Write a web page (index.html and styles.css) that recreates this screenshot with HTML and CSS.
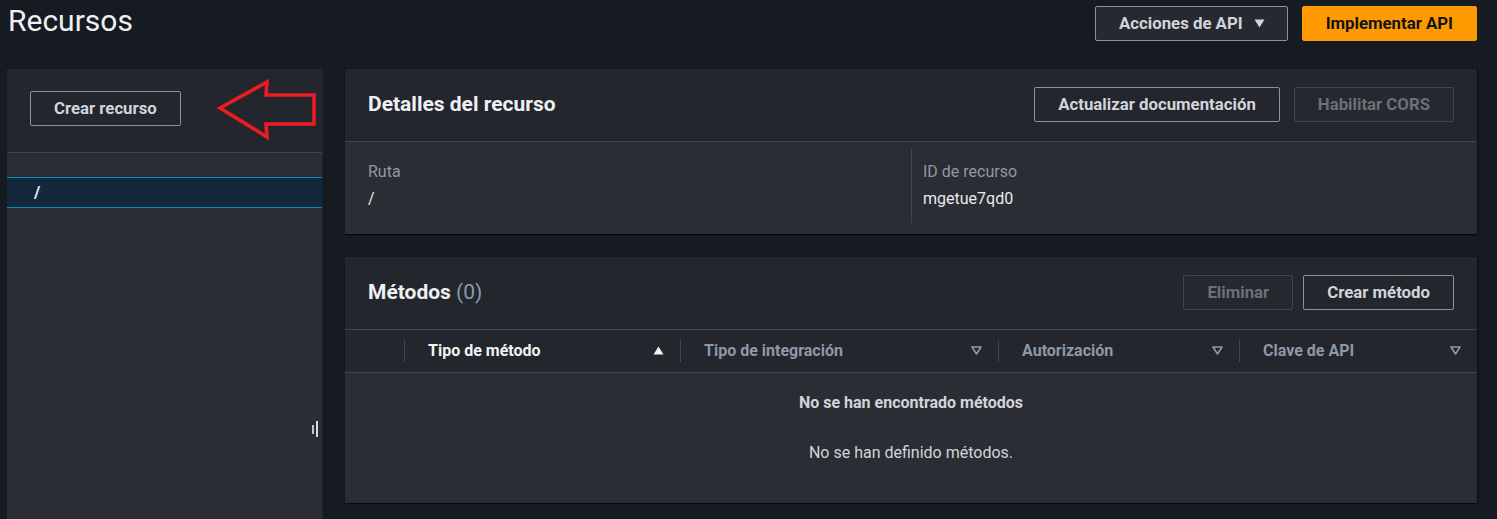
FILE: index.html
```html
<!DOCTYPE html>
<html lang="es">
<head>
<meta charset="utf-8">
<title>Recursos</title>
<link rel="stylesheet" href="styles.css">
</head>
<body>
<div class="page">
  <header class="topbar">
    <h1 class="title">Recursos</h1>
    <div class="top-actions">
      <button class="btn btn-normal btn-dark">Acciones de API
        <svg class="caret" width="11" height="9" viewBox="0 0 11 9"><polygon points="0.5,0.5 10.5,0.5 5.5,8.5" fill="#d1d5db"/></svg>
      </button>
      <button class="btn btn-primary">Implementar API</button>
    </div>
  </header>

  <div class="layout">
    <aside class="side">
      <div class="side-head">
        <button class="btn btn-normal">Crear recurso</button>
      </div>
      <div class="tree">
        <div class="tree-row">/</div>
      </div>
      <svg class="arrow" width="104" height="64" viewBox="0 0 104 64">
        <polygon points="4,30 51,4 50,17 98,17 98,46 50,46 51,59" fill="none" stroke="#ec1c24" stroke-width="3.6" stroke-linejoin="miter"/>
      </svg>
      <div class="resize"><span class="r1"></span><span class="r2"></span></div>
    </aside>

    <main class="main">
      <section class="card">
        <div class="card-head">
          <h2 class="card-title">Detalles del recurso</h2>
          <div class="actions">
            <button class="btn btn-normal">Actualizar documentación</button>
            <button class="btn btn-disabled">Habilitar CORS</button>
          </div>
        </div>
        <div class="details">
          <div class="field">
            <div class="label">Ruta</div>
            <div class="value">/</div>
          </div>
          <div class="field field-sep">
            <div class="label">ID de recurso</div>
            <div class="value">mgetue7qd0</div>
          </div>
        </div>
      </section>

      <section class="card">
        <div class="card-head">
          <h2 class="card-title">Métodos <span class="count">(0)</span></h2>
          <div class="actions actions-tight">
            <button class="btn btn-disabled">Eliminar</button>
            <button class="btn btn-normal">Crear método</button>
          </div>
        </div>
        <div class="thead">
          <div class="th th-blank"></div>
          <div class="th th-active"><span>Tipo de método</span>
            <svg width="11" height="9" viewBox="0 0 11 9"><polygon points="0.5,8.5 10.5,8.5 5.5,0.5" fill="#f2f3f3"/></svg>
          </div>
          <div class="th"><span>Tipo de integración</span>
            <svg width="11" height="9" viewBox="0 0 11 9"><polygon points="1,1 10,1 5.5,8" fill="none" stroke="#8d99a8" stroke-width="1.6" stroke-linejoin="round"/></svg>
          </div>
          <div class="th"><span>Autorización</span>
            <svg width="11" height="9" viewBox="0 0 11 9"><polygon points="1,1 10,1 5.5,8" fill="none" stroke="#8d99a8" stroke-width="1.6" stroke-linejoin="round"/></svg>
          </div>
          <div class="th"><span>Clave de API</span>
            <svg width="11" height="9" viewBox="0 0 11 9"><polygon points="1,1 10,1 5.5,8" fill="none" stroke="#8d99a8" stroke-width="1.6" stroke-linejoin="round"/></svg>
          </div>
        </div>
        <div class="empty">
          <div class="empty-title">No se han encontrado métodos</div>
          <div class="empty-text">No se han definido métodos.</div>
        </div>
      </section>
    </main>
  </div>
</div>
</body>
</html>
```

FILE: styles.css
```css
* { box-sizing: border-box; }
html, body { margin: 0; padding: 0; }
body {
  background: #161a21;
  font-family: Roboto, "Liberation Sans", sans-serif;
  color: #d1d5db;
  height: 519px;
  overflow: hidden;
}
.page {
  padding: 0 20px 0 7px;
}
.topbar {
  height: 69px;
  display: flex;
  justify-content: space-between;
  align-items: flex-start;
}
.title {
  margin: 3px 0 0 1px;
  font-size: 30px;
  line-height: 36px;
  font-weight: 400;
  color: #eef0f2;
}
.top-actions {
  display: flex;
  gap: 14px;
  margin-top: 6px;
}
.btn {
  font-family: Roboto, "Liberation Sans", sans-serif;
  font-size: 16.8px;
  font-weight: 700;
  height: 35px;
  line-height: 33px;
  padding: 0 23px;
  border-radius: 2px;
  border: 1px solid #8d9199;
  background: transparent;
  color: #d1d5db;
  display: inline-flex;
  align-items: center;
  white-space: nowrap;
}
.btn-dark { background: #262a30; padding: 0 22px 0 23px; }
.caret { margin-left: 11px; }
.btn-primary {
  background: #ff9900;
  border-color: #ff9900;
  color: #0f141a;
}
.btn-disabled {
  border-color: #414750;
  background: #25282e;
  color: #6b7079;
}
.layout {
  display: grid;
  grid-template-columns: 315px 1fr;
  gap: 23px;
  align-items: start;
}
.side {
  position: relative;
  background: #2a2d33;
  height: 460px;
  box-shadow: 1px 0 0 #1f2228;
}
.side-head {
  height: 84px;
  background: #23262c;
  border-bottom: 1px solid #414750;
  padding: 22px 0 0 23px;
}
.tree { padding-top: 24px; }
.tree-row {
  height: 31px;
  border-top: 1px solid #0b8bc0;
  border-bottom: 1px solid #0b8bc0;
  background: #13283d;
  padding-left: 27px;
  font-size: 17px;
  line-height: 29px;
  font-weight: 700;
  color: #e9ebed;
}
.arrow {
  position: absolute;
  left: 209px;
  top: 9px;
}
.resize {
  position: absolute;
  left: 305px;
  top: 352px;
  display: flex;
  align-items: center;
  gap: 2px;
}
.resize .r1 { width: 2px; height: 9px; background: #c3c7cc; }
.resize .r2 { width: 2px; height: 16px; background: #d9dcdf; }
.main {
  display: flex;
  flex-direction: column;
  gap: 23px;
}
.card {
  background: #23262c;
  box-shadow: 0 1px 1px rgba(0,0,0,0.6), 1px 0 1px rgba(0,0,0,0.4);
}
.card-head {
  height: 73px;
  border-bottom: 1px solid #414750;
  display: flex;
  align-items: center;
  justify-content: space-between;
  padding: 0 23px 1px;
}
.card-title {
  margin: 0 0 2px;
  font-size: 21px;
  font-weight: 700;
  color: #eef0f2;
}
.count { font-weight: 400; color: #8d99a8; }
.actions { display: flex; gap: 14px; }
.actions-tight { gap: 10px; }
.details {
  background: #2a2d33;
  display: grid;
  grid-template-columns: 1fr 1fr;
  padding: 7px 23px 11px;
}
.field {
  padding: 11px 0 12px;
}
.field-sep {
  border-left: 1px solid #414750;
  padding-left: 11px;
}
.label {
  font-size: 16px;
  line-height: 24px;
  color: #8d99a8;
}
.value {
  font-size: 16px;
  line-height: 24px;
  margin-top: 3px;
  color: #e9ebed;
}
.thead {
  display: grid;
  grid-template-columns: 59px 276px 318px 241px 1fr;
  height: 43px;
  border-bottom: 1px solid #414750;
  align-items: center;
}
.th {
  position: relative;
  display: flex;
  align-items: center;
  justify-content: space-between;
  padding: 0 16px 1px 24px;
  font-size: 16px;
  font-weight: 700;
  color: #8d99a8;
  height: 42px;
}
.th::before {
  content: "";
  position: absolute;
  left: 0;
  top: 10px;
  width: 1px;
  height: 22px;
  background: #414750;
}
.th-blank::before { display: none; }
.th-active { color: #f2f3f3; }
.empty {
  background: #2a2d33;
  text-align: center;
  padding: 18px 0 38px;
}
.empty-title {
  font-size: 16px;
  line-height: 24px;
  font-weight: 700;
  color: #d1d5db;
}
.empty-text {
  font-size: 16px;
  line-height: 24px;
  margin-top: 26px;
  color: #d1d5db;
}
```
